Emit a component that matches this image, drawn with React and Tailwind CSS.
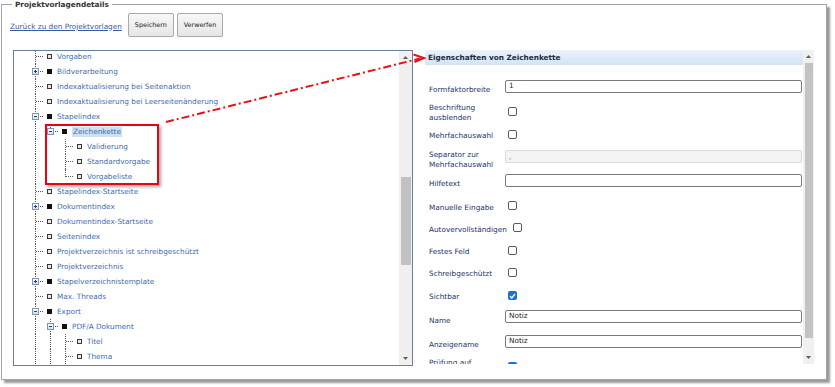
import React from 'react'

const tree = [
  { t: 'Vorgaben', l: 1 },
  { t: 'Bildverarbeitung', l: 1, exp: '+' },
  { t: 'Indexaktualisierung bei Seitenaktion', l: 1 },
  { t: 'Indexaktualisierung bei Leerseitenänderung', l: 1 },
  { t: 'Stapelindex', l: 1, exp: '-' },
  { t: 'Zeichenkette', l: 2, exp: '-', last: true, g: [true], sel: true },
  { t: 'Validierung', l: 3, g: [true, false] },
  { t: 'Standardvorgabe', l: 3, g: [true, false] },
  { t: 'Vorgabeliste', l: 3, g: [true, false], last: true },
  { t: 'Stapelindex-Startseite', l: 1 },
  { t: 'Dokumentindex', l: 1, exp: '+' },
  { t: 'Dokumentindex-Startseite', l: 1 },
  { t: 'Seitenindex', l: 1 },
  { t: 'Projektverzeichnis ist schreibgeschützt', l: 1 },
  { t: 'Projektverzeichnis', l: 1 },
  { t: 'Stapelverzeichnistemplate', l: 1, exp: '+' },
  { t: 'Max. Threads', l: 1 },
  { t: 'Export', l: 1, exp: '-' },
  { t: 'PDF/A Dokument', l: 2, exp: '-', g: [true] },
  { t: 'Titel', l: 3, g: [true, true] },
  { t: 'Thema', l: 3, g: [true, true] },
]

// h = row height, lt = label offset, ct = control offset
const fields = [
  { label: ['Formfaktorbreite'], type: 'input', value: '1', h: 24, lt: 8, ct: 3 },
  { label: ['Beschriftung', 'ausblenden'], type: 'cb', h: 24, lt: 2, ct: 6 },
  { label: ['Mehrfachauswahl'], type: 'cb', h: 20, lt: 6, ct: 5 },
  { label: ['Separator zur', 'Mehrfachauswahl'], type: 'disabled', value: ',', h: 26, lt: 5, ct: 5 },
  { label: ['Hilfetext'], type: 'input', value: '', h: 24, lt: 8, ct: 3 },
  { label: ['Manuelle Eingabe'], type: 'cb', h: 22, lt: 8, ct: 6 },
  { label: ['Autovervollständigen'], type: 'cb', h: 22, lt: 8, ct: 6 },
  { label: ['Festes Feld'], type: 'cb', h: 22, lt: 8, ct: 7 },
  { label: ['Schreibgeschützt'], type: 'cb', h: 22, lt: 8, ct: 7 },
  { label: ['Sichtbar'], type: 'cb', checked: true, h: 22, lt: 9, ct: 8 },
  { label: ['Name'], type: 'input', value: 'Notiz', h: 24, lt: 11, ct: 5 },
  { label: ['Anzeigename'], type: 'input', value: 'Notiz', h: 24, lt: 11, ct: 6 },
  { label: ['Prüfung auf'], type: 'cb', checked: true, h: 24, lt: 5, ct: 9 },
]

function Expander({ sign }) {
  return (
    <div className="absolute left-[4px] top-[4px] h-[7px] w-[7px] border border-[#8196b4] bg-gradient-to-b from-white to-[#d3deec]">
      <div className="absolute left-[1px] top-[2px] h-[1px] w-[3px] bg-[#1f3f7c]" />
      {sign === '+' && <div className="absolute left-[2px] top-[1px] h-[3px] w-[1px] bg-[#1f3f7c]" />}
    </div>
  )
}

function TreeRow({ r }) {
  const guides = r.g || []
  return (
    <div className="flex h-[15px] items-center whitespace-nowrap">
      <div className="w-[14px] shrink-0" />
      {guides.map((on, i) => (
        <div key={i} className="relative h-full w-[15px] shrink-0">
          {on && <div className="absolute left-[7px] top-0 h-full border-l border-dotted border-[#555]" />}
        </div>
      ))}
      <div className="relative h-full w-[15px] shrink-0">
        <div className={`absolute left-[7px] top-0 border-l border-dotted border-[#555] ${r.last ? 'h-[8px]' : 'h-full'}`} />
        <div className="absolute left-[8px] top-[7px] w-[7px] border-t border-dotted border-[#555]" />
        {r.exp && <Expander sign={r.exp} />}
      </div>
      <div className={`ml-[4px] mr-[5px] h-[5px] w-[5px] shrink-0 ${r.exp ? 'bg-[#111]' : 'border border-[#3a3a3a] bg-[#e6e6e6]'}`} />
      <span className={`leading-[10px] text-[#3f6cb0] ${r.sel ? 'bg-[#cde1ef] px-[1px]' : ''}`}>{r.t}</span>
    </div>
  )
}

function Arrow({ down }) {
  return (
    <div className="flex h-[13px] shrink-0 items-center justify-center">
      <svg width="5" height="3" viewBox="0 0 5 3">
        <path d={down ? 'M0 0 H5 L2.5 3 Z' : 'M0 3 H5 L2.5 0 Z'} fill="#5c5c5c" />
      </svg>
    </div>
  )
}

function Checkbox({ checked }) {
  if (checked)
    return (
      <div className="flex h-[9px] w-[9px] items-center justify-center rounded-[2px] bg-[#1b6fd8]">
        <svg width="7" height="6" viewBox="0 0 7 6">
          <path d="M1 3.2 L2.8 5 L6 1" fill="none" stroke="white" strokeWidth="1.4" />
        </svg>
      </div>
    )
  return <div className="h-[9px] w-[9px] rounded-[2px] border border-[#5a5a5a] bg-white" />
}

function Field({ f }) {
  return (
    <div className="flex shrink-0 items-start" style={{ height: f.h }}>
      <div className="min-w-[80px] shrink-0 pl-[4px] pr-[3px] leading-[10px] text-[#22346e]" style={{ paddingTop: f.lt }}>
        {f.label.map((s) => <div key={s} className="whitespace-nowrap">{s}</div>)}
      </div>
      <div style={{ marginTop: f.ct }}>
        {f.type === 'cb' && <div className="ml-[3px]"><Checkbox checked={f.checked} /></div>}
        {f.type === 'input' && (
          <div className="h-[13px] w-[297px] rounded-[2px] border border-[#7a7a7a] bg-white pl-[3px] leading-[10px] text-[#222]">{f.value}</div>
        )}
        {f.type === 'disabled' && (
          <div className="h-[13px] w-[297px] rounded-[2px] border border-[#dadada] bg-[#f3f3f3] pl-[3px] leading-[12px] text-[#888]">{f.value}</div>
        )}
      </div>
    </div>
  )
}

export default function App() {
  return (
    <div className="relative h-[387px] w-[835px] overflow-hidden bg-white pt-[4px] font-['DejaVu_Sans',sans-serif] text-[7.3px] leading-[10px]">
      <div className="relative ml-[1px] h-[376px] w-[826px] border border-[#a3a3a3] shadow-[3px_3px_2px_#9a9a9a]">
        <div className="absolute -top-[5px] left-[10px] bg-white px-[3px] leading-[9px] font-bold text-[#333]">Projektvorlagendetails</div>

        <div className="flex items-center pl-[8px] pt-[8px]">
          <a className="mt-[3px] text-[#3a5a9f] underline">Zurück zu den Projektvorlagen</a>
          <button className="ml-[6px] h-[24px] rounded-[2px] border border-[#a9a9a9] bg-gradient-to-b from-[#f7f7f7] to-[#e6e6e6] px-[6px] text-[6.4px] text-[#222]">Speichern</button>
          <button className="ml-[3px] h-[24px] rounded-[2px] border border-[#a9a9a9] bg-gradient-to-b from-[#f7f7f7] to-[#e6e6e6] px-[6px] text-[6.4px] text-[#222]">Verwerfen</button>
        </div>

        <div className="mt-[13px] flex gap-[12px] pl-[11px]">
          <div className="flex h-[316px] w-[400px] border border-[#6a7f9c]">
            <div className="flex-1 overflow-hidden">
              <div className="-mt-[2px]">
                {tree.map((r) => <TreeRow key={r.t} r={r} />)}
              </div>
            </div>
            <div className="flex w-[13px] flex-col bg-[#f0f0f0]">
              <Arrow />
              <div className="h-[113px]" />
              <div className="ml-[2px] h-[88px] w-[10px] bg-[#c1c1c1]" />
              <div className="flex-1" />
              <Arrow down />
            </div>
          </div>

          <div className="flex h-[314px] w-[389px]">
            <div className="flex flex-1 flex-col overflow-hidden">
              <div className="flex h-[15px] shrink-0 items-center bg-gradient-to-b from-[#eaf2fb] to-[#d4e3f3] pl-[3px] font-bold text-[#1b2a3e]">Eigenschaften von Zeichenkette</div>
              <div className="flex flex-col pt-[12px]">
                {fields.map((f) => <Field key={f.label[0]} f={f} />)}
              </div>
            </div>
            <div className="flex w-[11px] flex-col bg-[#f0f0f0]">
              <Arrow />
              <div className="mx-auto h-[275px] w-[8px] bg-[#c3c3c3]" />
              <div className="flex-1" />
              <Arrow down />
            </div>
          </div>
        </div>
      </div>

      {/* annotation: red frame + dash-dot arrow */}
      <div className="absolute left-[45px] top-[124px] h-[61px] w-[114px] border-2 border-[#e30613] shadow-[2px_2px_3px_rgba(0,0,0,0.35)]" />
      <svg className="pointer-events-none absolute left-0 top-0" width="835" height="387">
        <line x1="166" y1="122" x2="420" y2="58.5" stroke="#e8101a" strokeWidth="2" strokeDasharray="8 3 2 3" />
        <path d="M413.5 54.5 L424 58 L414.5 62" fill="none" stroke="#e8101a" strokeWidth="2" />
      </svg>
    </div>
  )
}
